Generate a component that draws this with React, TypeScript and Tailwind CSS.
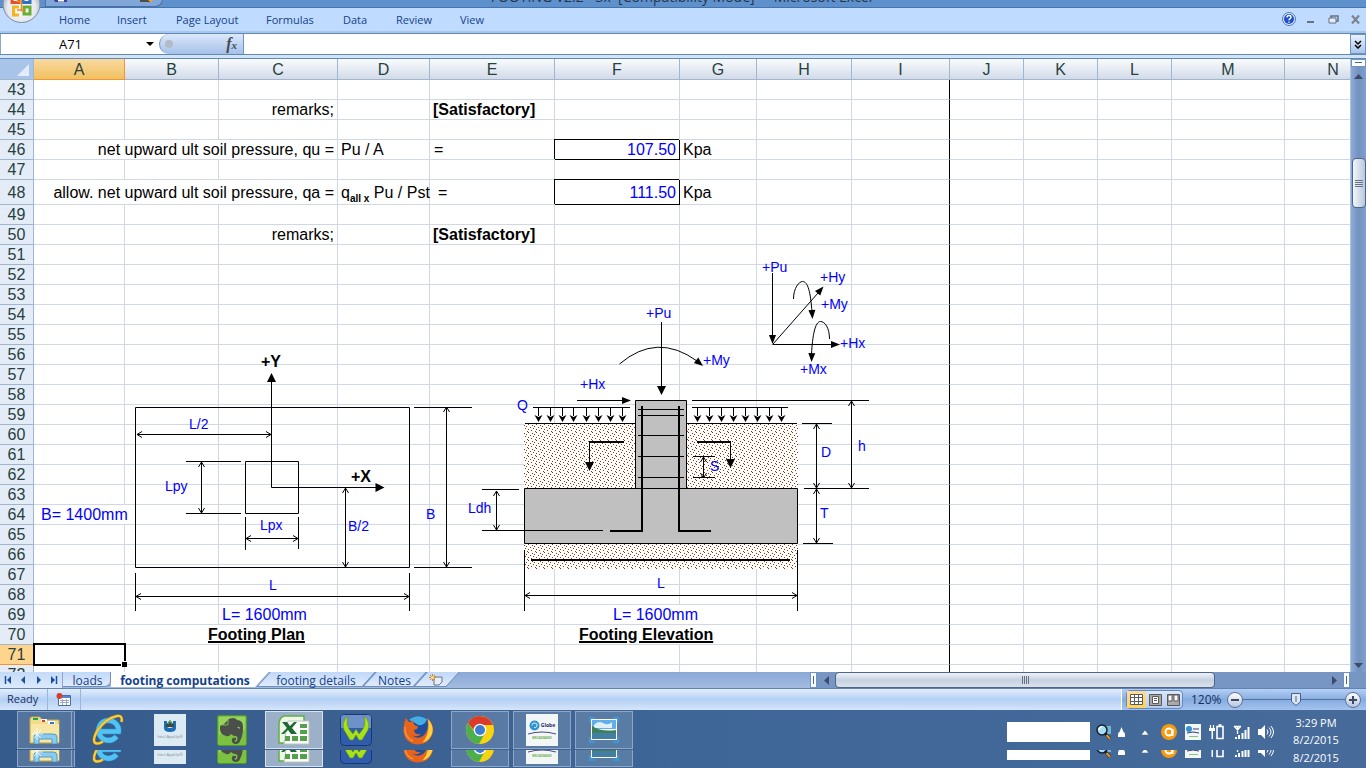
import React from 'react';

type Cell = {
  text: React.ReactNode;
  span?: number;
  className?: string;
};

const COLUMNS = [
  { name: 'A', width: 'w-[91px]' },
  { name: 'B', width: 'w-[94px]' },
  { name: 'C', width: 'w-[119px]' },
  { name: 'D', width: 'w-[92px]' },
  { name: 'E', width: 'w-[125px]' },
  { name: 'F', width: 'w-[125px]' },
  { name: 'G', width: 'w-[77px]' },
  { name: 'H', width: 'w-[95px]' },
  { name: 'I', width: 'w-[98px]' },
  { name: 'J', width: 'w-[74px]' },
  { name: 'K', width: 'w-[74px]' },
  { name: 'L', width: 'w-[74px]' },
  { name: 'M', width: 'w-[113px]' },
  { name: 'N', width: 'w-[97px]' },
];

const ROWS = Array.from({ length: 30 }, (_, i) => 43 + i);

const BOXED = 'text-right pr-[3px] text-[#0000ff] border-black shadow-[-1px_-1px_0_#000]';

const CELLS: Record<string, Cell> = {
  C44: { text: 'remarks;', className: 'text-right pr-[3px]' },
  E44: { text: '[Satisfactory]', className: 'font-bold pl-[3px]' },
  A46: { text: 'net upward ult soil pressure, qu =', span: 3, className: 'text-right pr-[3px]' },
  D46: { text: 'Pu / A', className: 'pl-[3px]' },
  E46: { text: '=', className: 'pl-1' },
  F46: { text: '107.50', className: BOXED },
  G46: { text: 'Kpa', className: 'pl-[3px]' },
  A48: { text: 'allow. net upward ult soil pressure, qa =', span: 3, className: 'text-right pr-[3px]' },
  D48: {
    text: <>q<span className="relative top-1 text-[10px] font-semibold leading-none">all x</span> Pu / Pst</>,
    className: 'pl-[3px]',
  },
  E48: { text: '=', className: 'pl-2' },
  F48: { text: '111.50', className: BOXED },
  G48: { text: 'Kpa', className: 'pl-[3px]' },
  C50: { text: 'remarks;', className: 'text-right pr-[3px]' },
  E50: { text: '[Satisfactory]', className: 'font-bold pl-[3px]' },
  A64: { text: 'B= 1400mm', span: 2, className: 'pl-[7px] text-[#0000ff]' },
  C69: { text: 'L= 1600mm', className: 'pl-[3px] text-[#0000ff]' },
  F69: { text: 'L= 1600mm', span: 2, className: 'text-center text-[#0000ff]' },
  B70: { text: 'Footing Plan', span: 2, className: 'pl-[83px] font-bold underline decoration-2' },
  F70: { text: 'Footing Elevation', span: 2, className: 'pl-6 font-bold underline decoration-2' },
};

const MENU = [
  { label: 'Home', width: 'w-[29px]' },
  { label: 'Insert', width: 'w-[30px]' },
  { label: 'Page Layout', width: 'w-[61px]' },
  { label: 'Formulas', width: 'w-12' },
  { label: 'Data', width: 'w-6' },
  { label: 'Review', width: 'w-[35px]' },
  { label: 'View', width: 'w-6' },
];

const UI_FONT = "font-['Open_Sans','Noto_Sans',sans-serif]";

/* ---------- Window chrome ---------- */

const OfficeButton: React.FC = () => (
  <button aria-label="Office Button" className="absolute left-0 top-0 z-10 h-[25px] w-11 overflow-hidden">
    <svg width="44" height="25" viewBox="0 0 44 25">
      <defs>
        <radialGradient id="orb" cx="50%" cy="60%" r="55%">
          <stop offset="0" stopColor="#ffffff" />
          <stop offset="0.7" stopColor="#e6e9ee" />
          <stop offset="1" stopColor="#aab4c2" />
        </radialGradient>
      </defs>
      <circle cx="21.500" cy="4" r="18.500" fill="url(#orb)" stroke="#7b8ea8" />
      <path d="M12 -2v4.500h7v-5" fill="none" stroke="#e2502a" strokeWidth="3" />
      <path d="M23 -2v4.500h7v-5" fill="none" stroke="#2f6fc4" strokeWidth="3" />
      <path d="M19 7h-5.500v8h5.500" fill="none" stroke="#f6b420" strokeWidth="3" />
      <path d="M24 7h6v7h-6z" fill="none" stroke="#6bae35" strokeWidth="3" />
      <path d="M16.500 1.500h5v5M21.500 1.500v10M17 10h9" fill="none" stroke="#f08a24" strokeWidth="1.500" />
    </svg>
  </button>
);

const TitleBar: React.FC = () => (
  <header className="flex h-2 shrink-0 items-end overflow-hidden border-b border-[#4573ab] bg-[#5e91cb]">
    <div className="flex flex-1">
      <div className="ml-[45px] flex h-2 w-[118px] justify-between rounded-br-full border border-[#4a70a5] bg-[#80a7d8] px-2">
        <svg width="14" height="3" viewBox="0 0 14 3">
          <path d="M0 0h13v2H1z" fill="#3d3f9e" />
          <path d="M4 0h6v1.500H4z" fill="#fff" />
        </svg>
        <svg width="14" height="3" viewBox="0 0 14 3">
          <path d="M0 0h11v2H0z" fill="#4c4c4c" />
          <path d="M8 0h5l-2 2.500z" fill="#f0a43a" />
        </svg>
      </div>
    </div>
    <h1 className="whitespace-pre text-[14px] leading-5 text-[#25354d]">FOOTING V2.2 - 3x  [Compatibility Mode]  -  Microsoft Excel</h1>
    <div className="flex flex-1 justify-end pr-[3px]">
      <div className="h-2 w-[45px] border-t border-[#c75050]" />
    </div>
  </header>
);

const Ribbon: React.FC = () => (
  <nav className="flex h-[25px] shrink-0 items-end justify-between border-b-2 border-[#a9c6ea] bg-[#bfdbff] pl-[59px] text-[11px] text-[#15428b]">
    <div className="flex gap-x-[29px]">
      {MENU.map((item) => (
        <button key={item.label} className={`${item.width} h-[21px] whitespace-nowrap text-left`}>
          {item.label}
        </button>
      ))}
    </div>
    <div className="flex h-6 items-center gap-[7px] pr-1">
      <button aria-label="Help">
        <svg width="14" height="14" viewBox="0 0 14 14">
          <circle cx="7" cy="7" r="6.500" fill="#dfe9f8" stroke="#5576b8" />
          <circle cx="7" cy="7" r="5" fill="#1f50c8" />
          <path d="M5 5.500q0-2 2-2t2 1.700q0 1-1.200 1.600-.8.400-.8 1.400M7 9.500v1.200" fill="none" stroke="#fff" strokeWidth="1.400" />
        </svg>
      </button>
      <button aria-label="Minimize window" className="flex h-2 w-[14px] items-end justify-center">
        <span className="h-0.5 w-[7px] bg-[#68717e]" />
      </button>
      <button aria-label="Restore window" className="ml-1">
        <svg width="11" height="9" viewBox="0 0 11 9">
          <path d="M3 3V1h7v5H8" fill="none" stroke="#68717e" strokeWidth="1.500" />
          <path d="M1 3h7v5H1z" fill="#e4edf9" stroke="#68717e" />
        </svg>
      </button>
      <button aria-label="Close window" className="ml-1">
        <svg width="12" height="9" viewBox="0 0 12 9">
          <path d="M2 .5l7 8M9 .5l-7 8" stroke="#7b838e" strokeWidth="2.200" />
        </svg>
      </button>
    </div>
  </nav>
);

const FormulaBar: React.FC = () => (
  <div className="flex h-[26px] shrink-0 border-b border-[#5f8ab8] bg-[#d3e3f8] pb-[3px]">
    <div className="flex w-full border-y border-[#5f8ab8] bg-white">
      <input
        aria-label="Name Box"
        defaultValue="A71"
        className="w-[140px] border-l border-[#8ba8cf] text-center text-[13px] leading-5 text-black outline-none"
      />
      <button aria-label="Name list" className="flex w-[19px] items-center justify-center">
        <svg width="8" height="4" viewBox="0 0 8 4"><path d="M0 0h8L4 4z" fill="#000" /></svg>
      </button>
      <div className="flex w-[85px] items-center justify-between rounded-l-full border-l border-r border-[#6f93c4] bg-linear-to-b from-[#dce9fa] to-[#a5c0e8] pl-[5px] pr-1.5">
        <span className="h-2 w-2 rounded-full bg-[#b4bbc8]" />
        <button aria-label="Insert function" className="font-['Liberation_Serif',serif] text-[16px] font-bold italic leading-4 text-[#444b57]">
          f<span className="text-[11px]">x</span>
        </button>
      </div>
      <input aria-label="Formula" className="min-w-0 flex-1 px-1 text-[13px] outline-none" />
      <button aria-label="Expand formula bar" className="flex w-4 items-center justify-center border border-[#6f93c4] bg-linear-to-b from-[#e8f1fd] to-[#a9c4ea]">
        <svg width="8" height="9" viewBox="0 0 8 9">
          <path d="M1 1l3 3 3-3M1 5l3 3 3-3" fill="none" stroke="#000" strokeWidth="1.500" />
        </svg>
      </button>
    </div>
  </div>
);

/* ---------- Footing drawing ---------- */

type Line = { x1: number; y1: number; x2: number; y2: number };

// dimension line with an open arrow at both ends
const Dim: React.FC<Line> = ({ x1, y1, x2, y2 }) => (
  <path
    d={
      x1 === x2
        ? `M${x1} ${y1}V${y2}M${x1 - 3} ${y1 + 5}L${x1} ${y1}l3 5M${x1 - 3} ${y2 - 5}L${x1} ${y2}l3 -5`
        : `M${x1} ${y1}H${x2}M${x1 + 5} ${y1 - 3}L${x1} ${y1}l5 3M${x2 - 5} ${y2 - 3}L${x2} ${y2}l-5 3`
    }
    fill="none"
    stroke="#000"
  />
);

const Head: React.FC<{ x: number; y: number; angle: number; size?: number; half?: number }> = ({ x, y, angle, size = 9, half = 3.5 }) => (
  <path d={`M0 0L${-size} ${-half}V${half}z`} transform={`translate(${x} ${y}) rotate(${angle})`} />
);

const LABELS = [
  { x: 189, y: 429, text: 'L/2' },
  { x: 165, y: 491, text: 'Lpy' },
  { x: 260, y: 530, text: 'Lpx' },
  { x: 348, y: 531, text: 'B/2' },
  { x: 426, y: 519, text: 'B' },
  { x: 269, y: 590, text: 'L' },
  { x: 646, y: 318, text: '+Pu' },
  { x: 703, y: 365, text: '+My' },
  { x: 580, y: 389, text: '+Hx' },
  { x: 517, y: 410, text: 'Q' },
  { x: 468, y: 513, text: 'Ldh' },
  { x: 710, y: 471, text: 'S' },
  { x: 821, y: 457, text: 'D' },
  { x: 858, y: 451, text: 'h' },
  { x: 820, y: 518, text: 'T' },
  { x: 657, y: 588, text: 'L' },
  { x: 762, y: 272, text: '+Pu' },
  { x: 820, y: 282, text: '+Hy' },
  { x: 821, y: 309, text: '+My' },
  { x: 840, y: 348, text: '+Hx' },
  { x: 800, y: 374, text: '+Mx' },
];

const LOADS = [538.5, 550.5, 562.5, 573.5, 586.5, 598.5, 610.5, 622.5, 697.5, 709.5, 721.5, 733.5, 745.5, 757.5, 769.5, 781.5];

const FootingDrawing: React.FC = () => (
  <svg
    className="pointer-events-none absolute left-0 top-0"
    width="1350"
    height="613"
    viewBox="0 59 1350 613"
    fontFamily="'Liberation Sans', Arial, sans-serif"
    fontSize="14"
  >
    <defs>
      <pattern id="soil" width="8" height="8" patternUnits="userSpaceOnUse">
        <rect width="8" height="8" fill="#fff" />
        <path
          d="M0 0h1v1h-1zM4 1h1v1h-1zM2 3h1v1h-1zM6 2h1v1h-1zM5 4h1v1h-1zM0 5h1v1h-1zM3 6h1v1h-1zM7 7h1v1h-1z"
          fill="#993300"
          shapeRendering="crispEdges"
        />
      </pattern>
    </defs>

    {/* plan */}
    <g fill="none" stroke="#000">
      <path d="M135.5 407.5h274v160h-274zM245.500 461.500h53v52h-53z" />
      <path d="M271.500 380V487.500H378" />
      <path d="M186 461.500h55M186 513.500h55M245.500 517v33M298.500 517v32M414 407.500h58M414 567.500h58M135.500 573v38M409.500 573v38" />
    </g>
    <Head x={271.5} y={373} angle={-90} half={4.5} />
    <Head x={384.5} y={487.5} angle={0} half={4.5} />
    <Dim x1={137} y1={434.5} x2={271} y2={434.5} />
    <Dim x1={201.5} y1={462} x2={201.5} y2={513} />
    <Dim x1={246} y1={538.5} x2={298} y2={538.5} />
    <Dim x1={345.5} y1={488} x2={345.5} y2={567} />
    <Dim x1={446.5} y1={407} x2={446.5} y2={567} />
    <Dim x1={136} y1={596.5} x2={409} y2={596.5} />
    <text x="261" y="367" fontSize="16" fontWeight="bold">+Y</text>
    <text x="351" y="482" fontSize="16" fontWeight="bold">+X</text>

    {/* elevation */}
    <path d="M524 423h274v65H524zM524 544h274v25H524z" fill="url(#soil)" />
    <path d="M524.500 488.500h273v55h-273zM635.500 400.500h51v88h-51z" fill="#c0c0c0" stroke="#000" />
    <g fill="none" stroke="#000">
      <path d="M525 423.500h110M687 423.500h110M533 407.500h97M692 407.500h96M577 400.500h46M661.500 322v66" />
      <path d="M638 409.500h46M638 415.500h46M638 435.500h46M638 456.500h46M638 477.500h46" />
      <path d="M482 489.500h37M482 530.500h121M693 456.500h22M693 477.500h22" />
      <path d="M692 400.500h177M802 423.500h30M804 488.500h65M803 543.500h30M524.500 550v61M797.500 550v61" />
      <path d="M619.500 364Q657 332 697 361" />
      <path d="M589.500 442v22M730.500 442v20" />
    </g>
    <path d="M642 406V531H610M679 406V531H711M531 560H790M624 442H589M697 442H731" fill="none" stroke="#000" strokeWidth="2" />
    {LOADS.map((x) => (
      <g key={x}>
        <path d={`M${x} 408V416`} stroke="#000" />
        <path d={`M${x - 4} 415l4 2 4-2-4 7z`} />
      </g>
    ))}
    <Head x={661.5} y={395} angle={90} half={4.5} />
    <Head x={703} y={366} angle={40} />
    <Head x={631} y={400.5} angle={0} />
    <Head x={589.5} y={471} angle={90} half={4.5} />
    <Head x={730.5} y={468} angle={90} half={4.5} />
    <Dim x1={496.5} y1={491} x2={496.5} y2={530} />
    <Dim x1={703.5} y1={457} x2={703.5} y2={478} />
    <Dim x1={816.5} y1={424} x2={816.5} y2={488} />
    <Dim x1={816.5} y1={489} x2={816.5} y2={543} />
    <Dim x1={851.5} y1={401} x2={851.5} y2={488} />
    <Dim x1={525} y1={595.5} x2={797} y2={595.5} />

    {/* sign convention */}
    <g fill="none" stroke="#000">
      <path d="M772.500 273v63M772.500 344.500H833M773 344L818 293" />
      <path d="M793.500 299C793.500 288 799 281.500 802.500 281.500C808 281.500 810.500 292 812 312" />
      <path d="M829.500 339C829.500 328 825 321.500 820.500 321.500C815 321.500 812.500 336 811.500 354" />
    </g>
    <Head x={772.5} y={344} angle={90} />
    <Head x={840} y={344.5} angle={0} />
    <Head x={823.5} y={286.5} angle={-49} />
    <Head x={812.5} y={319} angle={86} />
    <Head x={811.5} y={362} angle={92} />

    <g fill="#0000ff">
      {LABELS.map((l) => (
        <text key={`${l.x}-${l.y}`} x={l.x} y={l.y}>{l.text}</text>
      ))}
    </g>
  </svg>
);

/* ---------- Sheet ---------- */

const SheetRow: React.FC<{ row: number }> = ({ row }) => {
  const active = row === 71;
  const cells: React.ReactNode[] = [];

  for (let i = 0; i < COLUMNS.length; i++) {
    const name = COLUMNS[i].name;
    const cell = CELLS[name + row];
    const border = name === 'I' ? 'border-r-black border-b-[#d0d7e5]' : 'border-[#d0d7e5]';
    cells.push(
      <td
        key={name}
        colSpan={cell?.span}
        className={`relative whitespace-nowrap border-b border-r p-0 ${cell?.className?.includes('border-black') ? '' : border} ${cell?.className ?? ''}`}
      >
        {cell?.text}
        {active && name === 'A' && (
          <span className="absolute -bottom-0.5 -left-px -right-0.5 -top-0.5 z-10 border-2 border-black">
            <span className="absolute -bottom-[3px] -right-[3px] h-[6px] w-[6px] border-l border-t border-white bg-black" />
          </span>
        )}
      </td>
    );
    if (cell?.span) i += cell.span - 1;
  }

  return (
    <tr className={row === 48 ? 'h-[25px]' : 'h-5'}>
      <th
        scope="row"
        className={`border-b border-r p-0 font-normal text-[#27413e] ${active ? 'border-[#f29536] bg-[#ffd58d]' : 'border-[#9eb6ce] bg-[#e4ecf7]'}`}
      >
        {row}
      </th>
      {cells}
    </tr>
  );
};

const Sheet: React.FC = () => (
  <main className="flex min-h-0 flex-1">
    <div className="relative min-w-0 flex-1 overflow-hidden bg-white">
      <table className="w-[1382px] table-fixed border-separate border-spacing-0 text-[16px] leading-[19px] text-black">
        <colgroup>
          <col className="w-[34px]" />
          {COLUMNS.map((c) => <col key={c.name} className={c.width} />)}
        </colgroup>
        <thead>
          <tr className="h-[21px]">
            <th className="border-b border-r border-[#9eb6ce] bg-[#a9c4e9] p-0">
              <svg width="33" height="20" viewBox="0 0 33 20"><path d="M29 5v12H17z" fill="#e3ecf8" /></svg>
            </th>
            {COLUMNS.map((c) => (
              <th
                key={c.name}
                scope="col"
                className={`border-b border-r p-0 font-normal text-[#27413e] ${c.name === 'A' ? 'border-[#f29536] bg-linear-to-b from-[#f9d99f] to-[#f1c15f]' : 'border-[#9eb6ce] bg-linear-to-b from-[#f9fcfd] to-[#d3dbe9]'}`}
              >
                {c.name}
              </th>
            ))}
          </tr>
        </thead>
        <tbody>
          {ROWS.map((row) => <SheetRow key={row} row={row} />)}
        </tbody>
      </table>
      <FootingDrawing />
    </div>

    {/* vertical scroll bar */}
    <div className="flex w-4 shrink-0 flex-col items-center border-l border-[#a9c4ea] bg-linear-to-r from-[#8fabd4] via-[#7392c0] to-[#819fcb]">
      <div className="flex h-2 w-full justify-center border border-[#6f93c4] bg-white pt-0.5">
        <span className="h-px w-[7px] bg-[#41699c]" />
      </div>
      <button aria-label="Scroll up" className="flex h-[91px] items-start pt-[7px]">
        <svg width="9" height="5" viewBox="0 0 9 5"><path d="M0 5h9L4.500 0z" fill="#3f4a6b" /></svg>
      </button>
      <button aria-label="Vertical scroll thumb" className="flex h-[50px] w-[14px] flex-col items-center justify-center gap-px rounded-sm border border-[#4f6489] bg-linear-to-r from-[#f3f6fa] to-[#b9c8de]">
        {[0, 1, 2, 3].map((n) => <span key={n} className="h-px w-2 bg-[#6a7385]" />)}
      </button>
      <button aria-label="Scroll down" className="flex flex-1 items-end pb-1">
        <svg width="9" height="5" viewBox="0 0 9 5"><path d="M0 0h9L4.500 5z" fill="#3f4a6b" /></svg>
      </button>
    </div>
  </main>
);

const NAV_ICONS = [
  { label: 'First sheet', d: 'M1.500 0v8', head: 'M7 0v8L3 4z' },
  { label: 'Previous sheet', d: '', head: 'M6 0v8L2 4z' },
  { label: 'Next sheet', d: '', head: 'M3 0v8l4-4z' },
  { label: 'Last sheet', d: 'M7.500 0v8', head: 'M2 0v8l4-4z' },
];

const SLANTED =
  'relative isolate h-[15px] text-[#15428b] before:absolute before:inset-0 before:-z-10 before:-skew-x-[42deg] before:border before:border-t-0 before:border-[#6f8fbd] before:bg-linear-to-b before:from-[#c0d8f8] before:to-[#dfebfc]';

const SheetTabs: React.FC = () => (
  <div className="flex h-[17px] shrink-0 justify-between border-b border-[#5f83b3] bg-linear-to-b from-[#8ba9d6] to-[#a2bbe0] text-[12px] leading-[17px]">
    <div className="flex">
      <div className="flex w-[63px] items-center gap-[5px] border-r border-[#8aa6d0] bg-linear-to-b from-[#c5dbf8] to-[#dceafc] pl-1">
        {NAV_ICONS.map((icon) => (
          <button key={icon.label} aria-label={icon.label} className="w-[10px]">
            <svg width="9" height="8" viewBox="0 0 9 8">
              <path d={icon.head} fill="#1c4e9c" />
              {icon.d && <path d={icon.d} stroke="#1c4e9c" strokeWidth="1.500" />}
            </svg>
          </button>
        ))}
      </div>
      <button className="h-[15px] w-12 rounded-br-md border-b border-r border-[#6f8fbd] bg-linear-to-b from-[#c0d8f8] to-[#dfebfc] pl-0.5 text-[#15428b]">
        loads
      </button>
      <button className="relative isolate z-10 h-[15px] w-[152px] bg-linear-to-b from-white to-white bg-[length:138px_100%] bg-no-repeat pr-1 font-bold text-[#15428b] before:absolute before:inset-0 before:left-5 before:-z-10 before:-skew-x-[42deg] before:border-r before:border-[#6f8fbd] before:bg-white">
        footing computations
      </button>
      <button className={`${SLANTED} w-[106px]`}>footing details</button>
      <button className={`${SLANTED} w-[51px]`}>Notes</button>
      <button aria-label="Insert worksheet" className={`${SLANTED} flex w-[33px] items-center justify-center`}>
        <svg width="15" height="12" viewBox="0 0 15 12">
          <path d="M5 3h8v5l-3 3H5z" fill="#e8edf5" stroke="#62738e" />
          <path d="M3.500 0v7M0 3.500h7M1 1l5 5M6 1L1 6" stroke="#d8801c" />
          <circle cx="3.500" cy="3.500" r="1.500" fill="#ffe27a" />
        </svg>
      </button>
    </div>
    {/* horizontal scroll bar */}
    <div className="flex w-[556px] shrink-0 bg-[#7896c3]">
      <span className="h-4 w-[7px] border border-[#6f93c4] bg-white px-0.5 py-[3px]">
        <span className="block h-2 w-px bg-[#41699c]" />
      </span>
      <button aria-label="Scroll left" className="flex w-[18px] items-center justify-center">
        <svg width="5" height="9" viewBox="0 0 5 9"><path d="M5 0v9L0 4.500z" fill="#3f4a6b" /></svg>
      </button>
      <button aria-label="Horizontal scroll thumb" className="flex w-[380px] items-center justify-center gap-px rounded-sm border border-[#4f6489] bg-linear-to-b from-[#f0f3f8] via-[#c5d0e0] to-[#dbe2ec]">
        {[0, 1, 2, 3].map((n) => <span key={n} className="h-2 w-px bg-[#6a7385]" />)}
      </button>
      <button aria-label="Scroll right" className="flex flex-1 items-center justify-end pr-1.5">
        <svg width="5" height="9" viewBox="0 0 5 9"><path d="M0 0v9l5-4.500z" fill="#3f4a6b" /></svg>
      </button>
      <span className="mr-4 h-4 w-[7px] border border-[#6f93c4] bg-white px-0.5 py-[3px]">
        <span className="block h-2 w-px bg-[#41699c]" />
      </span>
    </div>
  </div>
);

const StatusBar: React.FC = () => (
  <footer className="flex h-[21px] shrink-0 justify-between bg-linear-to-b from-[#e3eefd] via-[#b4d0f4] to-[#d5e5fa] text-[11px] text-[#15305f]">
    <div className="flex items-center">
      <span className="w-[47px] pl-[7px]">Ready</span>
      <button aria-label="Record macro" className="flex h-full w-[34px] items-center justify-center border-x border-[#9ab6dd]">
        <svg width="16" height="14" viewBox="0 0 16 14">
          <path d="M2.500 2.500h12v10h-12z" fill="#fff" stroke="#4f6ba0" />
          <path d="M3 3h11v2H3z" fill="#5b84d0" />
          <path d="M4 7.500h9M4 9.500h9M6.500 6v6M10.500 6v6" stroke="#9aaccb" />
          <circle cx="3.500" cy="3" r="3" fill="#d2402c" />
        </svg>
      </button>
    </div>
    <div className="flex w-[245px] shrink-0 items-center border-l border-white bg-linear-to-b from-[#b5d0f5] via-[#86acdf] to-[#a4c3ee] pl-1">
      <div className="flex h-[19px] rounded-sm border border-[#6488bf] bg-linear-to-b from-[#dbe8f9] to-[#b5cdf0]">
        <button aria-label="Normal view" className="flex w-[19px] items-center justify-center bg-linear-to-b from-[#fbdca0] to-[#ffd257]">
          <svg width="13" height="11" viewBox="0 0 13 11">
            <path d="M.5.5h12v10H.5z" fill="#fff" stroke="#5a5a5a" />
            <path d="M4.500 0v11M8.500 0v11M0 3.500h13M0 7.500h13" stroke="#5a5a5a" />
          </svg>
        </button>
        <button aria-label="Page layout view" className="flex w-[18px] items-center justify-center">
          <svg width="13" height="12" viewBox="0 0 13 12">
            <path d="M.5.5h12v11H.5z" fill="#a8a8a8" stroke="#5a5a5a" />
            <path d="M3.500 2.500h6v7h-6z" fill="#fff" stroke="#5a5a5a" />
            <path d="M5 4.500h3M5 6.500h3" stroke="#5a5a5a" />
          </svg>
        </button>
        <button aria-label="Page break preview" className="flex w-[18px] items-center justify-center">
          <svg width="13" height="12" viewBox="0 0 13 12">
            <path d="M.5.5h12v11H.5z" fill="#a8a8a8" stroke="#5a5a5a" />
            <path d="M1 1h4v6H1zM7 1h4v6H7z" fill="#fff" stroke="#5a5a5a" />
          </svg>
        </button>
      </div>
      <span className="w-[44px] pl-2 text-[12px]">120%</span>
      <button aria-label="Zoom out" className="flex h-4 w-4 shrink-0 items-center justify-center rounded-full border border-[#5d7399] bg-linear-to-b from-white to-[#b6c6de]">
        <span className="h-0.5 w-2 bg-[#3d4a61]" />
      </button>
      <div className="flex w-[102px] items-center">
        <span className="h-px w-12 bg-[#54709f]" />
        <svg width="10" height="13" viewBox="0 0 10 13">
          <path d="M.5.5h9v8L5 12.500.5 8.500z" fill="#dfe8f5" stroke="#46618f" />
          <path d="M5 3v6" stroke="#46618f" />
        </svg>
        <span className="h-px flex-1 bg-[#54709f]" />
      </div>
      <button aria-label="Zoom in" className="flex h-4 w-4 shrink-0 items-center justify-center rounded-full border border-[#5d7399] bg-linear-to-b from-white to-[#b6c6de]">
        <svg width="8" height="8" viewBox="0 0 8 8"><path d="M4 0v8M0 4h8" stroke="#3d4a61" strokeWidth="2" /></svg>
      </button>
    </div>
  </footer>
);

/* ---------- Taskbar ---------- */

const ExplorerIcon = () => (
  <svg width="32" height="28" viewBox="0 0 32 28">
    <path d="M1 3q0-2 2-2h8l2 3h17v23H1z" fill="#f2dc8c" stroke="#c9a94e" />
    <path d="M4 2h5v2H4z" fill="#1ea54a" />
    <path d="M12 3h6v3h-6z" fill="#fff" />
    <path d="M13 4h3v2h-3z" fill="#d8412d" />
    <path d="M19 5h7v3h-7z" fill="#fff" />
    <path d="M21 6h4v2h-4z" fill="#2b77d1" />
    <path d="M2 8h28v18H2z" fill="#f7e7a6" />
    <path d="M5 28v-7q0-3 3-3h16q4 0 4 3v7h-5v-5H10v5z" fill="#8dcbee" stroke="#4d9bcb" />
    <path d="M8 12v12M3 18h11M5 15l7 7M12 14l-7 8" stroke="#fff" strokeWidth=".8" />
  </svg>
);

const InternetExplorerIcon = () => (
  <svg width="32" height="32" viewBox="0 0 32 32">
    <path d="M7 17.500H26.500A10 10 0 1 0 24.500 22.500" fill="none" stroke="#2a93cf" strokeWidth="5.600" />
    <path d="M7 17.500H26.500A10 10 0 1 0 24.500 22.500" fill="none" stroke="#52c3f3" strokeWidth="4.600" />
    <path d="M29.500 8Q31 1 25 2 14 4 5 17-1 29 5 29.500q3 0 6-2" fill="none" stroke="#c98f12" strokeWidth="2.800" />
    <path d="M29.500 8Q31 1 25 2 14 4 5 17-1 29 5 29.500q3 0 6-2" fill="none" stroke="#fbcf3b" strokeWidth="2" />
  </svg>
);

const IntelIcon = () => (
  <span className="flex h-8 w-8 flex-col items-center bg-[#dceaf4] pt-1.5">
    <svg width="14" height="13" viewBox="0 0 14 13">
      <path d="M1 1v7q0 4 6 4t6-4V1h-3v6q-3 2-6 0V1z" fill="#1b6fb8" />
      <path d="M3 5l4-5 4 5v2H3z" fill="#3b4b3d" />
      <path d="M5 4l2-3 2 3" fill="none" stroke="#6bb43f" />
    </svg>
    <span className="whitespace-nowrap text-[4px] leading-[7px] text-[#7d878f]">Intel AppUp®</span>
  </span>
);

const EvernoteIcon = () => (
  <svg width="30" height="31" viewBox="0 0 30 31">
    <rect x=".5" y=".5" width="29" height="30" rx="2" fill="#7cc142" stroke="#4e9a24" />
    <path d="M2 2h26v13Q14 12 2 20z" fill="#a3d96c" opacity=".7" />
    <path d="M6 10l5-5q1-2 5-2 3 0 4 2 6 0 6 7 0 9-3 14-1 3-4 3-5 0-4-5 1-2 4-1v2q-2 0-1 1.500 2 1 2.500-2.500.5-3-2.500-3-3-.5-4-2-2 3-5 2-7-2-6-9 0-2 3-2z" fill="#4b4f4a" />
    <path d="M11 5v4q0 1-1 1H6" fill="none" stroke="#7cc142" />
    <path d="M20 12q3-1 3 2z" fill="#a3d96c" />
  </svg>
);

const ExcelIcon = () => (
  <svg width="32" height="30" viewBox="0 0 32 30">
    <path d="M6 1h20v27H1V8q1-6 5-7z" fill="#eef6ea" stroke="#5fb043" strokeWidth="1.500" />
    <path d="M10 6h21v23H6z" fill="#fff" stroke="#b9c8b5" />
    <path d="M22 9h7v4h-7zM22 15h7v4h-7zM14 21h6v5h-6zM22 21h7v5h-7zM7 21h5v5H7z" fill="#55a04b" />
    <path d="M4 7h5l3 4 4-4h3l-5 6 5 6h-6l-3-4-4 4H3l6-6z" fill="#1d6b31" />
  </svg>
);

const WIcon = () => (
  <svg width="32" height="32" viewBox="0 0 32 32">
    <rect x=".5" y=".5" width="31" height="31" rx="4" fill="#2f5cab" stroke="#16367a" />
    <path d="M1 3q0-2 3-2h24q3 0 3 2v11H1z" fill="#7e9fd1" opacity=".8" />
    <path d="M8 2Q1 8 4 16l6 10h3l3-5 3 5h3l6-10q3-8-4-14 2 8-1 13l-4 5-3-5-3 5-4-5Q6 10 8 2z" fill="#a9e01c" stroke="#5d9610" strokeWidth=".6" />
  </svg>
);

const FirefoxIcon = () => (
  <svg width="32" height="32" viewBox="0 0 32 32">
    <circle cx="16.500" cy="15.500" r="13.500" fill="#1d4f9c" />
    <path d="M7 6Q15-1 25 5q-2 7-9 6-5-4-9-5z" fill="#43aee6" />
    <path d="M25 4q8 7 5.500 16-4 10.500-14.500 10.500Q3 30 1.500 17 1.500 9 4 4l3 4 5-1q-2 4 4 5.500 0 3-4 3.500 0 5 7 4-4 4-9 1 5 5 11 1 7-6 4-18z" fill="#e8631b" />
    <path d="M26 5q7 8 3.500 16-3 6-9 7.500 8-9 5.500-23.500z" fill="#fbd142" />
    <path d="M3 13q-1 10 8 14" fill="none" stroke="#f2933a" strokeWidth="1.500" />
  </svg>
);

const ChromeIcon = () => (
  <svg width="30" height="30" viewBox="0 0 30 30">
    <circle cx="15" cy="15" r="14" fill="#f8d30f" />
    <path d="M2.900 8A14 14 0 0 1 28 10H15l-5.500 6z" fill="#db3b2b" />
    <path d="M2.900 8A14 14 0 0 0 14 29l5.500-10-4 1.500L10 18z" fill="#4caf4f" />
    <circle cx="15" cy="15" r="6.300" fill="#fff" />
    <circle cx="15" cy="15" r="5" fill="#3b7dd0" />
  </svg>
);

const GlobeIcon = () => (
  <span className="flex h-8 w-8 flex-col items-center bg-[#f3f6f6] pt-1.5">
    <span className="flex items-center gap-px">
      <svg width="11" height="11" viewBox="0 0 11 11">
        <circle cx="5.500" cy="5.500" r="5" fill="#2e93cf" />
        <path d="M3 5.500q0-3 3-2.500t2 3-3 1.500" fill="none" stroke="#d4effb" />
      </svg>
      <span className="text-[5px] font-bold leading-[7px] text-[#28286c]">Globe</span>
    </span>
    <svg width="28" height="4" viewBox="0 0 28 4"><path d="M0 3q14-4 28 0" fill="none" stroke="#4a4a86" /></svg>
    <span className="text-[3px] font-bold leading-[7px] text-[#6eb052]">BROADBAND</span>
  </span>
);

const PhotoIcon = () => (
  <svg width="30" height="26" viewBox="0 0 30 26">
    <path d="M2 2h26v21H2z" fill="#fff" />
    <path d="M3 3h24v9H3z" fill="#62aee8" />
    <path d="M5 8q4-5 9-2t9-1v6H5z" fill="#dff0fb" />
    <path d="M3 9q9 6 24 4v3H3z" fill="#3c8054" />
    <path d="M3 16h24v6H3z" fill="#437fa3" />
    <path d="M1 6V1h5M24 1h5v5M29 20v5h-5M6 25H1v-5" fill="none" stroke="#3d97dd" strokeWidth="2" />
  </svg>
);

const APPS = [
  { name: 'File Explorer', Icon: ExplorerIcon, tile: 'border border-[#8fa6c6] bg-white/15' },
  { name: 'Internet Explorer', Icon: InternetExplorerIcon, tile: '' },
  { name: 'Intel AppUp', Icon: IntelIcon, tile: '' },
  { name: 'Evernote', Icon: EvernoteIcon, tile: '' },
  { name: 'Excel', Icon: ExcelIcon, tile: 'border border-[#dbe2ec] bg-white/50' },
  { name: 'WOT', Icon: WIcon, tile: '' },
  { name: 'Firefox', Icon: FirefoxIcon, tile: '' },
  { name: 'Chrome', Icon: ChromeIcon, tile: 'border border-[#8fa6c6] bg-white/15' },
  { name: 'Globe Broadband', Icon: GlobeIcon, tile: 'border border-[#8fa6c6] bg-white/15' },
  { name: 'Photo Viewer', Icon: PhotoIcon, tile: 'border border-[#8fa6c6] bg-white/15' },
];

const Tray: React.FC = () => (
  <div className="flex items-center">
    <input aria-label="Search the web" className="mt-1 h-5 w-[83px] bg-white px-1 text-[11px] outline-none" />
    <button aria-label="Search" className="ml-1.5 mt-1">
      <svg width="16" height="16" viewBox="0 0 16 16">
        <path d="M9 2h6v8H9z" fill="#6fb9dc" />
        <circle cx="6" cy="6" r="5" fill="#a9dcf2" stroke="#16202c" strokeWidth="1.500" />
        <path d="M3 6q0-3 3-3" fill="none" stroke="#fff" strokeWidth="1.500" />
        <path d="M9 9l5 6" stroke="#16202c" strokeWidth="3" />
        <path d="M10.500 11l3.500 4" stroke="#e99523" strokeWidth="2" />
      </svg>
    </button>
    <svg className="ml-1.5 mt-1" width="7" height="10" viewBox="0 0 7 10"><path d="M3.500 0l2 5H6l1 2v3H0V7l1-2h.5z" fill="#fff" /></svg>
    <button aria-label="Show hidden icons" className="ml-4 mt-1">
      <svg width="8" height="5" viewBox="0 0 8 5"><path d="M0 5h8L4 0z" fill="#fff" stroke="#24405f" strokeWidth=".5" /></svg>
    </button>
    <svg className="ml-3 mt-1" width="16" height="16" viewBox="0 0 16 16">
      <circle cx="8" cy="8" r="8" fill="#f79a10" />
      <circle cx="8" cy="8" r="3.500" fill="none" stroke="#fff" strokeWidth="2" />
      <path d="M11.500 5v7" stroke="#fff" strokeWidth="2" />
    </svg>
    <svg className="ml-2 mt-1" width="16" height="16" viewBox="0 0 16 16">
      <path d="M0 0h16v16H0z" fill="#f1f6f6" />
      <circle cx="4" cy="5" r="3" fill="#2e93cf" />
      <path d="M8 5h6M2 9q6-2 12 0" fill="none" stroke="#3b3b80" />
      <path d="M4 12.500h9" stroke="#8cc474" />
    </svg>
    <svg className="ml-2 mt-1" width="16" height="16" viewBox="0 0 16 16">
      <path d="M8 2.500h6v12H8zM9.500 1h3" fill="none" stroke="#fff" strokeWidth="1.600" />
      <path d="M1.500 1v4M4.500 1v4" stroke="#fff" strokeWidth="1.200" />
      <path d="M0 4h6v3H4v8H2.500V7H0z" fill="#fff" />
    </svg>
    <svg className="ml-2 mt-1" width="17" height="15" viewBox="0 0 17 15">
      <path d="M1 1.500h7M1 1l3.500 4L8 1M4.500 1v8" fill="none" stroke="#fff" strokeWidth="1.300" />
      <path d="M3 14v-2M6 14v-4M9.500 14V8M12.500 14V5M15.500 14V2" stroke="#fff" strokeWidth="2" />
    </svg>
    <svg className="ml-2 mt-1" width="16" height="14" viewBox="0 0 16 14">
      <path d="M0 4h3l4-4v14l-4-4H0z" fill="#fff" />
      <path d="M9 4.500q2 2.500 0 5M11 2.500q4 4.500 0 9M13 1q5 6 0 12" fill="none" stroke="#fff" />
    </svg>
    <time className="flex w-[92px] flex-col pr-2 pt-0.5 text-center text-[11px] leading-[17px] text-white">
      <span>3:29 PM</span>
      <span>8/2/2015</span>
    </time>
  </div>
);

const Taskbar: React.FC = () => (
  <div className="flex h-10 w-full shrink-0 justify-between bg-linear-to-r from-[#355b8c] via-[#3e6697] to-[#466b9b]">
    <div className="flex gap-1 pb-px pl-[17px] pt-px">
      {APPS.map(({ name, Icon, tile }) => (
        <button key={name} aria-label={name} className={`flex w-[58px] items-center justify-center ${tile} ${name === 'File Explorer' ? 'border-r-4 border-double' : ''}`}>
          <Icon />
        </button>
      ))}
    </div>
    <Tray />
  </div>
);

const App: React.FC = () => {
  return (
    <div className={`relative flex h-screen flex-col overflow-hidden bg-[#355b8c] ${UI_FONT}`}>
      <OfficeButton />
      <TitleBar />
      <Ribbon />
      <FormulaBar />
      <div className="flex min-h-0 flex-1 flex-col font-['Liberation_Sans',Arial,sans-serif]">
        <Sheet />
      </div>
      <SheetTabs />
      <StatusBar />
      <Taskbar />
      {/* lower edge of the taskbar shows again below it */}
      <div className="flex h-[18px] shrink-0 items-end overflow-hidden">
        <Taskbar />
      </div>
    </div>
  );
};

export default App;
